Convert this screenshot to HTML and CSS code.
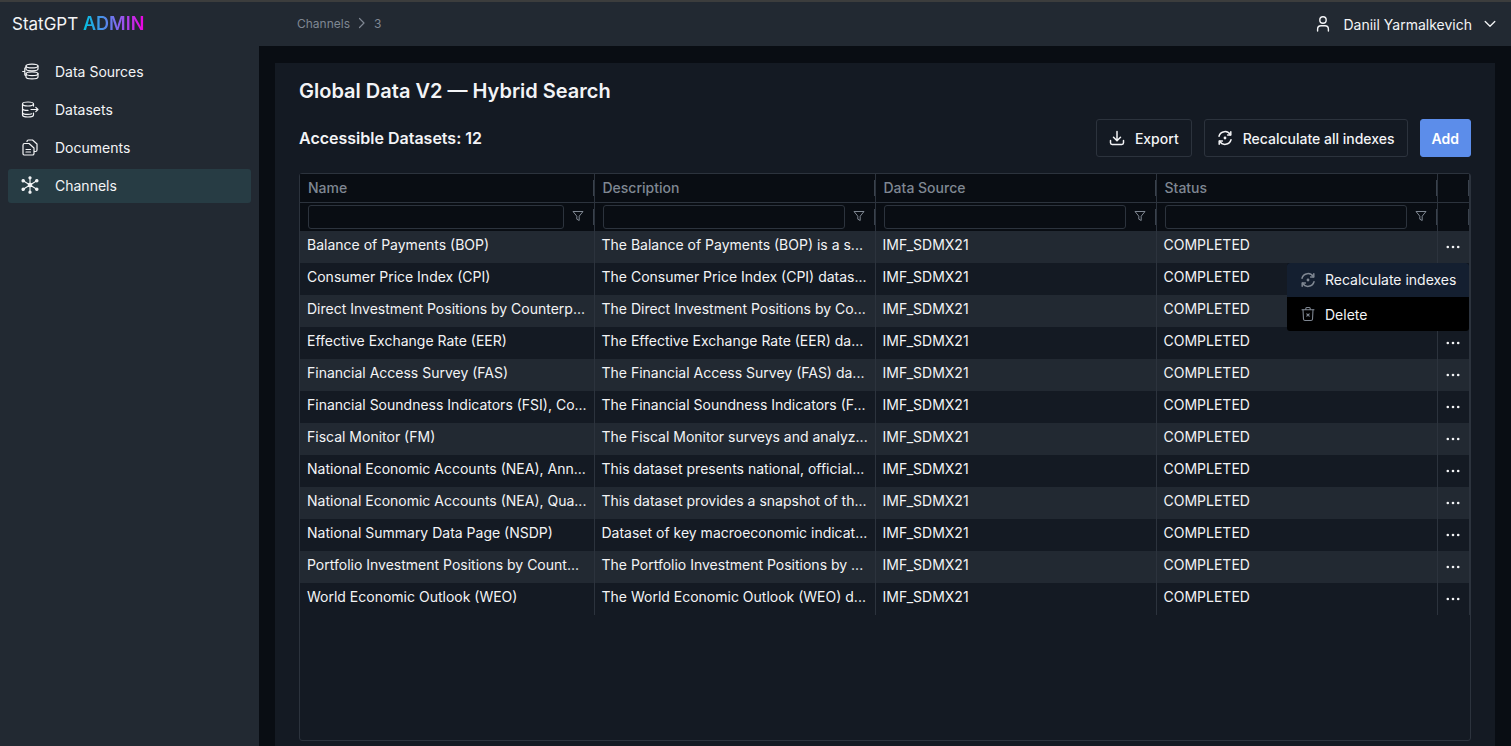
FILE: index.html
```html
<!DOCTYPE html>
<html lang="en">
<head>
    <meta charset="UTF-8">
    <title>StatGPT Admin</title>
    <link rel="stylesheet" href="styles.css">
</head>
<body>
    <svg class="icon-defs" width="0" height="0">
        <symbol id="i-refresh" viewBox="0 0 16 16">
            <path d="M2 6.2A6.2 6.2 0 0 1 13.4 4.8M14 9.8A6.2 6.2 0 0 1 2.6 11.2" fill="none" stroke="currentColor" stroke-width="1.5" stroke-linecap="round"/>
            <path d="M13.8 1.8V5H10.6M2.2 14.2V11H5.4" fill="none" stroke="currentColor" stroke-width="1.5" stroke-linecap="round" stroke-linejoin="round"/>
            <circle cx="8" cy="8" r="1.4" fill="currentColor"/>
        </symbol>
        <symbol id="i-filter" viewBox="0 0 12 12">
            <path d="M1 1.5H11L7.2 6.2V10.5L4.8 9.2V6.2Z" fill="none" stroke="currentColor" stroke-width="1" stroke-linejoin="round"/>
        </symbol>
        <symbol id="i-dots" viewBox="0 0 14 4">
            <circle cx="1.8" cy="2" r="1.3" fill="currentColor"/>
            <circle cx="7" cy="2" r="1.3" fill="currentColor"/>
            <circle cx="12.2" cy="2" r="1.3" fill="currentColor"/>
        </symbol>
    </svg>

    <header class="topbar">
        <div class="logo">StatGPT <span class="logo-accent">ADMIN</span></div>
        <nav class="crumbs">
            <span>Channels</span>
            <svg width="8" height="12" viewBox="0 0 8 12"><path d="M1.5 1.5L6 6L1.5 10.5" fill="none" stroke="currentColor" stroke-width="1.2" stroke-linecap="round" stroke-linejoin="round"/></svg>
            <span>3</span>
        </nav>
        <div class="user">
            <svg width="16" height="18" viewBox="0 0 16 18"><circle cx="8" cy="5" r="3.2" fill="none" stroke="currentColor" stroke-width="1.4"/><path d="M2.6 16V14.2C2.6 12 4.2 10.8 6 10.8H10C11.8 10.8 13.4 12 13.4 14.2V16" fill="none" stroke="currentColor" stroke-width="1.4" stroke-linecap="round"/></svg>
            <span class="user-name">Daniil Yarmalkevich</span>
            <svg width="12" height="8" viewBox="0 0 12 8"><path d="M1.2 1.5L6 6.2L10.8 1.5" fill="none" stroke="currentColor" stroke-width="1.3" stroke-linecap="round" stroke-linejoin="round"/></svg>
        </div>
    </header>

    <div class="layout">
        <aside class="sidebar">
            <a class="nav-item">
                <svg width="20" height="20" viewBox="0 0 20 20" fill="none" stroke="currentColor" stroke-width="1.2" stroke-linecap="round" stroke-linejoin="round"><ellipse cx="12" cy="5" rx="6" ry="1.9"/><path d="M6 5V8C6 9 8.7 9.8 12 9.8C15.3 9.8 18 9 18 8V5"/><ellipse cx="12" cy="12.7" rx="6" ry="1.9"/><path d="M6 12.7V15.9C6 16.9 8.7 17.8 12 17.8C15.3 17.8 18 16.9 18 15.9V12.7"/><path d="M6 6.5C5.2 6.5 4.8 7 4.8 7.6V13.4C4.8 14 5.2 14.5 6 14.5M2.7 10.5H4.8"/></svg>
                Data Sources
            </a>
            <a class="nav-item">
                <svg width="20" height="20" viewBox="0 0 20 20" fill="none" stroke="currentColor" stroke-width="1.2" stroke-linecap="round" stroke-linejoin="round"><ellipse cx="8" cy="5" rx="5.5" ry="2"/><path d="M2.5 5V16C2.5 17.1 5 18 8 18C11 18 13.5 17.1 13.5 16V14M13.5 5V7M2.5 9.4C2.5 10.5 5 11.4 8 11.4M2.5 13.4C2.5 14.5 5 15.4 8 15.4C9.4 15.4 10.7 15.2 11.7 14.8"/><path d="M11 10.5H18M15.8 8.3L18 10.5L15.8 12.7"/></svg>
                Datasets
            </a>
            <a class="nav-item">
                <svg width="20" height="20" viewBox="0 0 20 20" fill="none" stroke="currentColor" stroke-width="1.2" stroke-linejoin="round"><path d="M7 5V4.5C7 3.6 7.6 3 8.5 3H12.5L17 7V13C17 13.9 16.4 14.5 15.5 14.5H14"/><path d="M3 8.2C3 7.2 3.7 6.5 4.6 6.5H9L14 11V16.4C14 17.4 13.3 18 12.4 18H4.6C3.7 18 3 17.4 3 16.4Z"/><path d="M6 12.5H10.5M6 15H10.5" stroke-linecap="round"/></svg>
                Documents
            </a>
            <a class="nav-item active">
                <svg width="20" height="20" viewBox="0 0 20 20" fill="none" stroke="currentColor" stroke-width="1.1"><circle cx="10" cy="10" r="1.8" fill="currentColor"/><path d="M10 3V17M3.2 5.8L16.8 14.2M16.8 5.8L3.2 14.2" stroke-linecap="round"/><circle cx="10" cy="2.8" r="1.1" fill="currentColor"/><circle cx="10" cy="17.2" r="1.1" fill="currentColor"/><circle cx="3.2" cy="5.8" r="1.2" fill="currentColor"/><circle cx="16.8" cy="5.8" r="1.2" fill="currentColor"/><circle cx="3.2" cy="14.2" r="1.2" fill="currentColor"/><circle cx="16.8" cy="14.2" r="1.2" fill="currentColor"/></svg>
                Channels
            </a>
        </aside>

        <main class="content">
            <section class="panel">
                <h1 class="title">Global Data V2 — Hybrid Search</h1>
                <div class="toolbar">
                    <h2 class="subtitle">Accessible Datasets: 12</h2>
                    <div class="actions">
                        <button class="btn">
                            <svg width="16" height="16" viewBox="0 0 16 16" fill="none" stroke="currentColor" stroke-width="1.5" stroke-linecap="round" stroke-linejoin="round"><path d="M8 1.5V10.5M4.5 7.2L8 10.7L11.5 7.2"/><path d="M1.5 10.5V12.8C1.5 13.8 2.2 14.5 3.2 14.5H12.8C13.8 14.5 14.5 13.8 14.5 12.8V10.5"/></svg>
                            Export
                        </button>
                        <button class="btn">
                            <svg width="16" height="16"><use href="#i-refresh"/></svg>
                            Recalculate all indexes
                        </button>
                        <button class="btn btn-primary">Add</button>
                    </div>
                </div>

                <div class="table-wrap">
                    <table class="grid">
                        <colgroup>
                            <col class="col-name">
                            <col class="col-text">
                            <col class="col-text">
                            <col class="col-text">
                            <col class="col-more">
                        </colgroup>
                        <thead>
                            <tr class="head-row">
                                <th>Name</th>
                                <th>Description</th>
                                <th>Data Source</th>
                                <th>Status</th>
                                <th></th>
                            </tr>
                            <tr class="filter-row">
                                <th><div class="filter"><span class="filter-input"></span><svg width="12" height="12"><use href="#i-filter"/></svg></div></th>
                                <th><div class="filter"><span class="filter-input"></span><svg width="12" height="12"><use href="#i-filter"/></svg></div></th>
                                <th><div class="filter"><span class="filter-input"></span><svg width="12" height="12"><use href="#i-filter"/></svg></div></th>
                                <th><div class="filter"><span class="filter-input"></span><svg width="12" height="12"><use href="#i-filter"/></svg></div></th>
                                <th></th>
                            </tr>
                        </thead>
                        <tbody>
                            <tr><td>Balance of Payments (BOP)</td><td>The Balance of Payments (BOP) is a s...</td><td>IMF_SDMX21</td><td>COMPLETED</td><td class="more"><svg width="14" height="4"><use href="#i-dots"/></svg></td></tr>
                            <tr><td>Consumer Price Index (CPI)</td><td>The Consumer Price Index (CPI) datas...</td><td>IMF_SDMX21</td><td>COMPLETED</td><td class="more"><svg width="14" height="4"><use href="#i-dots"/></svg></td></tr>
                            <tr><td>Direct Investment Positions by Counterp...</td><td>The Direct Investment Positions by Co...</td><td>IMF_SDMX21</td><td>COMPLETED</td><td class="more"><svg width="14" height="4"><use href="#i-dots"/></svg></td></tr>
                            <tr><td>Effective Exchange Rate (EER)</td><td>The Effective Exchange Rate (EER) da...</td><td>IMF_SDMX21</td><td>COMPLETED</td><td class="more"><svg width="14" height="4"><use href="#i-dots"/></svg></td></tr>
                            <tr><td>Financial Access Survey (FAS)</td><td>The Financial Access Survey (FAS) da...</td><td>IMF_SDMX21</td><td>COMPLETED</td><td class="more"><svg width="14" height="4"><use href="#i-dots"/></svg></td></tr>
                            <tr><td>Financial Soundness Indicators (FSI), Co...</td><td>The Financial Soundness Indicators (F...</td><td>IMF_SDMX21</td><td>COMPLETED</td><td class="more"><svg width="14" height="4"><use href="#i-dots"/></svg></td></tr>
                            <tr><td>Fiscal Monitor (FM)</td><td>The Fiscal Monitor surveys and analyz...</td><td>IMF_SDMX21</td><td>COMPLETED</td><td class="more"><svg width="14" height="4"><use href="#i-dots"/></svg></td></tr>
                            <tr><td>National Economic Accounts (NEA), Ann...</td><td>This dataset presents national, official...</td><td>IMF_SDMX21</td><td>COMPLETED</td><td class="more"><svg width="14" height="4"><use href="#i-dots"/></svg></td></tr>
                            <tr><td>National Economic Accounts (NEA), Qua...</td><td>This dataset provides a snapshot of th...</td><td>IMF_SDMX21</td><td>COMPLETED</td><td class="more"><svg width="14" height="4"><use href="#i-dots"/></svg></td></tr>
                            <tr><td>National Summary Data Page (NSDP)</td><td>Dataset of key macroeconomic indicat...</td><td>IMF_SDMX21</td><td>COMPLETED</td><td class="more"><svg width="14" height="4"><use href="#i-dots"/></svg></td></tr>
                            <tr><td>Portfolio Investment Positions by Count...</td><td>The Portfolio Investment Positions by ...</td><td>IMF_SDMX21</td><td>COMPLETED</td><td class="more"><svg width="14" height="4"><use href="#i-dots"/></svg></td></tr>
                            <tr><td>World Economic Outlook (WEO)</td><td>The World Economic Outlook (WEO) d...</td><td>IMF_SDMX21</td><td>COMPLETED</td><td class="more"><svg width="14" height="4"><use href="#i-dots"/></svg></td></tr>
                        </tbody>
                    </table>

                    <div class="row-menu">
                        <div class="menu-item menu-item-hover">
                            <svg width="16" height="16"><use href="#i-refresh"/></svg>
                            Recalculate indexes
                        </div>
                        <div class="menu-item">
                            <svg width="16" height="16" viewBox="0 0 16 16" fill="none" stroke="currentColor" stroke-width="1.1" stroke-linecap="round" stroke-linejoin="round"><path d="M2 3.8H14M5.8 3.6V2.6C5.8 2 6.2 1.5 6.8 1.5H9.2C9.8 1.5 10.2 2 10.2 2.6V3.6"/><path d="M3 3.8L3.5 13.2C3.6 14 4.2 14.5 5 14.5H11C11.8 14.5 12.4 14 12.5 13.2L13 3.8"/><path d="M6.8 7.8L9.2 10.2M9.2 7.8L6.8 10.2"/></svg>
                            Delete
                        </div>
                    </div>
                </div>
            </section>
        </main>
    </div>
</body>
</html>
```

FILE: styles.css
```css
* {
    box-sizing: border-box;
}

html, body {
    height: 100%;
}

body {
    margin: 0;
    display: flex;
    flex-direction: column;
    overflow: hidden;
    font-family: Inter, "Noto Sans", sans-serif;
    font-size: 14px;
    color: #f3f4f6;
    background-color: #090d13;
    border-top: 2px solid #3c3d3d;
}

.icon-defs {
    position: absolute;
}

/* header */
.topbar {
    flex: none;
    height: 44px;
    display: flex;
    align-items: center;
    background-color: #222932;
    padding: 0 15px 0 12px;
}

.logo {
    width: 285px;
    padding-bottom: 2px;
    font-size: 17px;
    color: #f3f4f6;
}

.logo-accent {
    font-size: 18px;
    font-weight: 600;
    background: linear-gradient(90deg, #00c2e0 0%, #7f6cf0 55%, #f000e0 100%);
    -webkit-background-clip: text;
    background-clip: text;
    color: transparent;
}

.crumbs {
    display: flex;
    align-items: center;
    gap: 8px;
    margin-top: -2px;
    font-size: 12px;
    color: #7f8792;
}

.user {
    margin-left: auto;
    display: flex;
    align-items: center;
    color: #f3f4f6;
}

.user-name {
    margin: 0 12px;
}

/* page layout */
.layout {
    flex: 1;
    min-height: 0;
    display: flex;
}

.sidebar {
    flex: none;
    width: 259px;
    background-color: #222932;
    padding: 9px 8px;
    display: flex;
    flex-direction: column;
    gap: 4px;
}

.nav-item {
    height: 34px;
    display: flex;
    align-items: center;
    gap: 15px;
    padding: 0 0 2px 12px;
    border-radius: 3px;
    color: #f3f4f6;
}

.nav-item.active {
    background-color: #273c44;
}

.content {
    flex: 1;
    min-width: 0;
    padding: 17px 16px 0;
}

.panel {
    height: 100%;
    background-color: #141a23;
    padding: 16px 24px 5px;
    display: flex;
    flex-direction: column;
}

.title {
    margin: 0;
    font-size: 20px;
    line-height: 24px;
    font-weight: 600;
}

.toolbar {
    display: flex;
    align-items: center;
    justify-content: space-between;
    margin-top: 16px;
    margin-bottom: 16px;
}

.subtitle {
    margin: 0;
    font-size: 16px;
    font-weight: 600;
}

.actions {
    display: flex;
    gap: 12px;
}

.btn {
    height: 38px;
    display: flex;
    align-items: center;
    gap: 10px;
    padding: 0 12px;
    background: transparent;
    border: 1px solid #2c333d;
    border-radius: 3px;
    color: #f3f4f6;
    font-family: inherit;
    font-size: 14px;
    font-weight: 500;
}

.btn-primary {
    padding: 0 11px;
    background-color: #5c8dea;
    border-color: #5c8dea;
    color: #fff;
    font-weight: 600;
}

/* table */
.table-wrap {
    position: relative;
    flex: 1;
    min-height: 0;
    border: 1px solid #2c333d;
    border-radius: 3px;
}

.grid {
    width: 100%;
    border-collapse: collapse;
    table-layout: fixed;
}

.col-name {
    width: 294px;
}

.col-text {
    width: 281px;
}

.grid th {
    position: relative;
    background-color: #090d13;
    text-align: left;
    font-weight: 500;
    color: #7f8792;
    padding: 0 8px;
    border-right: 1px solid #2c333d;
}

/* column resize handle */
.grid th::after {
    content: "";
    position: absolute;
    top: 6px;
    bottom: 6px;
    right: 0;
    width: 1px;
    background-color: #3a424d;
}

.head-row th {
    height: 28px;
    border-bottom: 1px solid #2c333d;
}

.filter-row th {
    height: 29px;
    padding-right: 10px;
}

.filter {
    display: flex;
    align-items: center;
    gap: 8px;
    color: #7f8792;
}

.filter svg {
    margin-bottom: 2px;
}

.filter-input {
    flex: 1;
    height: 24px;
    border: 1px solid #2c333d;
    border-radius: 3px;
    background-color: #090d13;
}

.grid td {
    height: 32px;
    padding: 0 7px 6px;
    white-space: nowrap;
    overflow: hidden;
    border-right: 1px solid #2c333d;
    color: #f3f4f6;
}

.grid tbody tr:nth-child(odd) td {
    background-color: #222932;
}

.grid tbody tr:nth-child(even) td {
    background-color: #141a23;
}

.grid td.more {
    padding: 0;
    color: #f3f4f6;
}

.more svg {
    display: block;
    margin: 0 auto;
}

/* row actions menu */
.row-menu {
    position: absolute;
    top: 89px;
    right: 1px;
    width: 182px;
    border-radius: 3px;
    overflow: hidden;
    background-color: #000;
}

.menu-item {
    height: 34px;
    display: flex;
    align-items: center;
    gap: 9px;
    padding-left: 13px;
    color: #f3f4f6;
}

.menu-item svg {
    color: #7f8792;
}

.menu-item-hover {
    background-color: #141f30;
    padding-bottom: 1px;
}
```
